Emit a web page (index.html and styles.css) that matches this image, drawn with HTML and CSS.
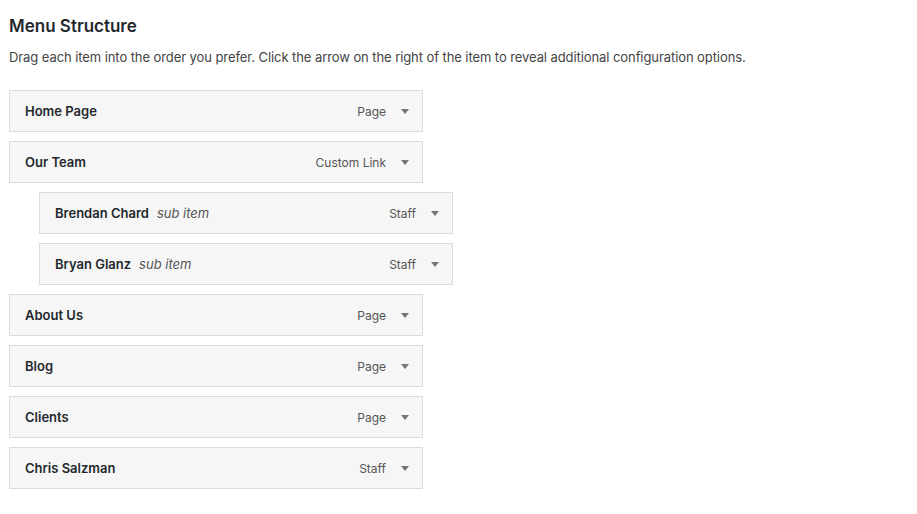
FILE: index.html
```html
<!DOCTYPE html>
<html lang="en">
<head>
<meta charset="utf-8">
<title>Menu Structure</title>
<link rel="stylesheet" href="styles.css">
</head>
<body>
<div class="page">
  <h2 class="title">Menu Structure</h2>
  <p class="desc">Drag each item into the order you prefer. Click the arrow on the right of the item to reveal additional configuration options.</p>
  <ul class="menu">
    <li class="item"><span class="name">Home Page</span><span class="meta"><span class="type">Page</span><span class="arrow"></span></span></li>
    <li class="item"><span class="name">Our Team</span><span class="meta"><span class="type">Custom Link</span><span class="arrow"></span></span></li>
    <li class="item sub"><span class="name">Brendan Chard<em class="subtag">sub item</em></span><span class="meta"><span class="type">Staff</span><span class="arrow"></span></span></li>
    <li class="item sub"><span class="name">Bryan Glanz<em class="subtag">sub item</em></span><span class="meta"><span class="type">Staff</span><span class="arrow"></span></span></li>
    <li class="item"><span class="name">About Us</span><span class="meta"><span class="type">Page</span><span class="arrow"></span></span></li>
    <li class="item"><span class="name">Blog</span><span class="meta"><span class="type">Page</span><span class="arrow"></span></span></li>
    <li class="item"><span class="name">Clients</span><span class="meta"><span class="type">Page</span><span class="arrow"></span></span></li>
    <li class="item"><span class="name">Chris Salzman</span><span class="meta"><span class="type">Staff</span><span class="arrow"></span></span></li>
  </ul>
</div>
</body>
</html>
```
FILE: styles.css
```css
html, body {
  margin: 0;
  padding: 0;
  background: #fff;
}
body {
  font-family: "Inter", "Liberation Sans", sans-serif;
  color: #444;
}
.page {
  padding: 15px 0 0 9px;
}
.title {
  margin: 0;
  font-size: 17px;
  line-height: 22px;
  font-weight: 600;
  color: #23282d;
}
.desc {
  margin: 10px 0 0;
  font-size: 13px;
  line-height: 20px;
  letter-spacing: -0.08px;
  color: #444;
}
.menu {
  list-style: none;
  margin: 23px 0 0;
  padding: 0;
  display: flex;
  flex-direction: column;
  gap: 9px;
}
.item {
  box-sizing: border-box;
  width: 414px;
  height: 42px;
  display: flex;
  align-items: center;
  justify-content: space-between;
  padding: 0 13px 0 15px;
  background: #f6f6f6;
  border: 1px solid #dcdcdc;
}
.item.sub {
  margin-left: 30px;
}
.name {
  font-size: 13px;
  font-weight: 600;
  color: #23282d;
}
.subtag {
  font-weight: 400;
  font-style: italic;
  color: #555;
  margin-left: 8px;
}
.meta {
  display: flex;
  align-items: center;
  gap: 15px;
}
.type {
  font-size: 12px;
  color: #555;
}
.arrow {
  width: 0;
  height: 0;
  margin-top: 1px;
  border-left: 4px solid transparent;
  border-right: 4px solid transparent;
  border-top: 5px solid #72777c;
}
```
